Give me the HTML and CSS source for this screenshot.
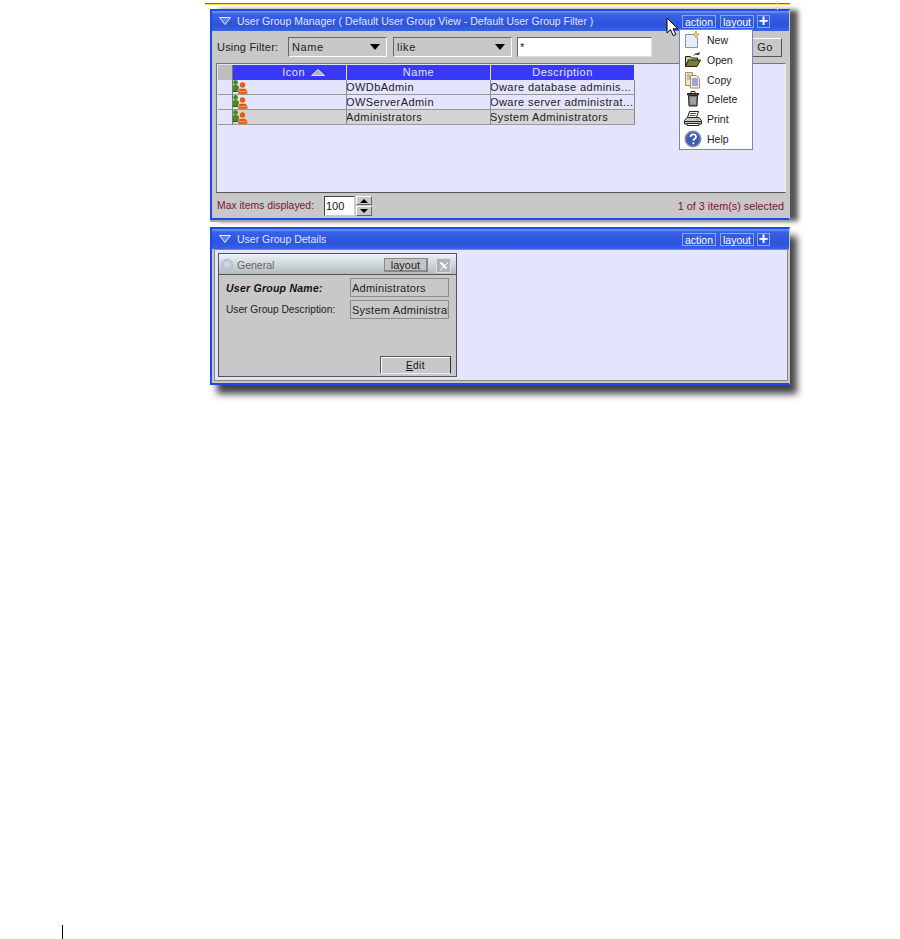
FILE: index.html
```html
<!DOCTYPE html>
<html lang="en">
<head>
<meta charset="utf-8">
<title>User Group Manager</title>
<link rel="stylesheet" href="styles.css">
</head>
<body>
<main class="page">
  <div class="shot">
    <div class="topline"></div>
    <section class="panel panel-manager">
      <header class="titlebar">
        <svg class="tri" width="12" height="8" viewBox="0 0 12 8"><path d="M.5.5h11L6 7.500z" fill="#5f80e8" stroke="#e8eeff"/></svg>
        <span class="title">User Group Manager ( Default User Group View - Default User Group Filter )</span>
        <span class="tool">action</span><span class="tool tool-layout">layout</span><span class="plus">+</span>
      </header>
      <div class="filterbar">
        <span class="label">Using Filter:</span>
        <span class="select sel-name">Name<i class="arrow"></i></span>
        <span class="select sel-like">like<i class="arrow"></i></span>
        <span class="input">*</span>
        <span class="go">Go</span>
      </div>
      <div class="tablearea">
        <div class="grid">
          <div class="corner"></div><div class="th th-icon">Icon <svg class="sort" width="14" height="7" viewBox="0 0 14 7"><path d="M7 .5L13.500 6.500H.5z" fill="#b4b4b4" stroke="#f4f4f4" stroke-width=".8"/></svg></div><div class="th">Name</div><div class="th">Description</div>
          <div class="rh"></div><div class="td"><svg class="grp" width="16" height="14" viewBox="0 0 16 14"><use href="#users"/></svg></div><div class="td">OWDbAdmin</div><div class="td">Oware database adminis...</div>
          <div class="rh"></div><div class="td"><svg class="grp" width="16" height="14" viewBox="0 0 16 14"><use href="#users"/></svg></div><div class="td">OWServerAdmin</div><div class="td">Oware server administrat...</div>
          <div class="rh"></div><div class="td sel"><svg class="grp" width="16" height="14" viewBox="0 0 16 14"><use href="#users"/></svg></div><div class="td sel">Administrators</div><div class="td sel">System Administrators</div>
        </div>
      </div>
      <footer class="statusbar">
        <span class="maroon max-label">Max items displayed:</span>
        <span class="spin-input">100</span>
        <span class="spin"><i class="up"></i><i class="down"></i></span>
        <span class="maroon status-right">1 of 3 item(s) selected</span>
      </footer>
    </section>

    <section class="panel panel-details">
      <header class="titlebar">
        <svg class="tri" width="12" height="8" viewBox="0 0 12 8"><path d="M.5.5h11L6 7.500z" fill="#5f80e8" stroke="#e8eeff"/></svg>
        <span class="title">User Group Details</span>
        <span class="tool">action</span><span class="tool tool-layout">layout</span><span class="plus">+</span>
      </header>
      <div class="detailarea">
        <div class="card">
          <div class="cardhead">
            <svg width="14" height="14" viewBox="0 0 14 14"><circle cx="7" cy="7" r="5" fill="none" stroke="#b4bedc" stroke-width="3" stroke-dasharray="2.500 .8"/></svg>
            <span class="cardtitle">General</span>
            <span class="cardlayout">layout</span>
            <span class="cardx"><svg width="13" height="13" viewBox="0 0 13 13"><path d="M3 10.500L10.500 3M3.500 3.500l6 6" stroke="#fff" stroke-width="2"/><path d="M2.500 10.500l3-3M7.500 5.500l3-3" stroke="#555" stroke-width=".7"/></svg></span>
          </div>
          <div class="cardbody">
            <div class="field"><span class="fname strong">User Group Name:</span><span class="fval">Administrators</span></div>
            <div class="field"><span class="fname">User Group Description:</span><span class="fval">System Administrators</span></div>
          </div>
          <div class="cardfoot"><span class="edit"><u>E</u>dit</span></div>
        </div>
      </div>
    </section>

    <nav class="menu">
      <div class="mi"><svg width="18" height="18" viewBox="0 0 18 18"><path d="M1.500 3.500h9l3 3v10h-12z" fill="#e6ecf8" stroke="#8a94b0"/><path d="M12 0l1 2.500 2.500 1-2.500 1-1 2.500-1-2.500-2.500-1 2.500-1z" fill="#f0d060" stroke="#a08020" stroke-width=".5"/></svg><span>New</span></div>
      <div class="mi"><svg width="18" height="18" viewBox="0 0 18 18"><path d="M1.500 15V5.500h5l1 1.500h6v2" fill="#c8c48c" stroke="#222"/><path d="M1.500 15.500l3-6.500h12l-3.500 6.500z" fill="#7c7c34" stroke="#222"/><path d="M10 4.500c1-2 3-2.500 5-1.500M15 1v2.500h-2.500" fill="none" stroke="#222"/></svg><span>Open</span></div>
      <div class="mi"><svg width="18" height="18" viewBox="0 0 18 18"><path d="M1.500 1.500h7v13h-7z" fill="#f4e4c8" stroke="#b08a50"/><path d="M6.500 4.500h6l3 3v9.500h-9z" fill="#eef0fa" stroke="#b08a50"/><path d="M8 8h6M8 10h6M8 12h6M8 14h6" stroke="#5058a8"/><path d="M3 4h3M3 6h3M3 8h3" stroke="#a09070"/></svg><span>Copy</span></div>
      <div class="mi"><svg width="18" height="18" viewBox="0 0 18 18"><path d="M3.500 3.500h11v1.500h-11z" fill="#666" stroke="#222"/><path d="M7 3V1.500h4V3" fill="none" stroke="#222"/><path d="M4.500 5.500h9l-.5 10.500H5z" fill="#777" stroke="#222"/><path d="M7 7v7.500M9 7v7.500M11 7v7.500" stroke="#ccc"/></svg><span>Delete</span></div>
      <div class="mi"><svg width="18" height="18" viewBox="0 0 18 18"><path d="M5.500 1.500h9l-2 6h-9z" fill="#fff" stroke="#222"/><path d="M6 3.500h6M5.500 5.500h6" stroke="#555"/><path d="M3 7.500h12l2.500 3v3.500H.5v-3.500z" fill="#c8c8c8" stroke="#222"/><path d="M1 11.500h16" stroke="#222"/><path d="M3 13.500h12v2H3z" fill="#fff" stroke="#222"/><path d="M12 9.500h3" stroke="#d0b020" stroke-width="1.500"/></svg><span>Print</span></div>
      <div class="mi"><svg width="18" height="18" viewBox="0 0 18 18"><circle cx="9" cy="9" r="7.700" fill="#3c5cb0" stroke="#8890a8" stroke-width="1.600"/><path d="M6.500 7c0-3.500 5.500-3.500 5.500-.3 0 2-2.600 2-2.600 4" fill="none" stroke="#fff" stroke-width="1.800"/><circle cx="9.400" cy="13.300" r="1.100" fill="#fff"/></svg><span>Help</span></div>
    </nav>

    <svg class="cursor" width="14" height="20" viewBox="0 0 14 20"><path d="M1 1v15l3.500-3.300 2.700 6 2.600-1.200-2.700-5.700H12z" fill="#fff" stroke="#000"/></svg>
  </div>

  <div class="pagefoot"><i class="changebar"></i></div>
</main>

<svg class="defs" width="0" height="0" aria-hidden="true">
  <defs>
    <g id="users">
      <circle cx="3.500" cy="2.500" r="2.400" fill="#4c8a1c"/>
      <path d="M.5 11.500V6.500L2 5h3l2 1.500V8L6 11.500z" fill="#4c8a1c"/>
      <path d="M.5 11h6v1h-6z" fill="#2c5a10"/>
      <path d="M6 14v-2.800L7.500 8.500h6l2 2.700V14z" fill="#e05a10" stroke="#fff" stroke-width=".3"/>
      <circle cx="10.500" cy="5" r="2.700" fill="#e06010"/>
      <path d="M7 11.500h7.500" stroke="#f8a060"/>
    </g>
  </defs>
</svg>
</body>
</html>
```
FILE: styles.css
```css
* { box-sizing: border-box; }
html, body { margin: 0; padding: 0; background: #fff; }
body { font-family: "Liberation Sans", Arial, sans-serif; font-size: 11px; color: #111; }
i { display: block; }
.defs { position: absolute; }

.page { height: 939px; display: flex; flex-direction: column; justify-content: space-between; overflow: hidden; }
.shot { position: relative; width: 580px; margin: 3px 0 0 210px; }
.topline { position: relative; height: 2px; margin-left: -5px; border-top: 1px solid #4c6ce0; background: #f0e040; margin-bottom: 4px; }
.topline::after { content: ""; position: absolute; left: 572px; top: -3px; width: 1px; height: 9px; background: #d8dcf8; }

.panel { border: 2px solid #2048e8; border-right: 1px solid #c8c8c8; background: #c8c8c8; display: flex; flex-direction: column; }
.panel-manager { height: 211px; box-shadow: 0 2px 0 #a8a8a8, 8px 1px 5px 0 #555; }
.panel-details { margin-top: 7px; height: 158px; box-shadow: 7px 9px 7px 0 #444; }

.titlebar { height: 20px; flex: none; display: flex; align-items: center; padding: 0 19px 0 7px; color: #dfe6fb; background: linear-gradient(#7c9cf4 0, #3a62e4 3px, #2c54dc 14px, #3a62e4 20px); font-size: 10.500px; }
.tri { margin-right: 6px; }
.title { flex: 1; white-space: nowrap; }
.tool { border: 1px solid #8ea6f0; height: 13px; line-height: 12px; color: #fff; font-size: 10.500px; width: 34px; text-align: center; }
.tool-layout { margin-left: 4px; }
.plus { width: 13px; height: 13px; border: 1px solid #8ea6f0; margin-left: 3px; color: #fff; font: bold 16px/10px "Liberation Sans", sans-serif; text-align: center; }

.filterbar { height: 32px; flex: none; display: flex; align-items: center; padding: 0 7px 0 5px; gap: 6px; color: #222; }
.label { width: 65px; letter-spacing: .2px; }
.select { position: relative; display: block; height: 20px; line-height: 18px; border: 1px solid; border-color: #666 #fff #fff #666; padding-left: 3px; background: #c8c8c8; letter-spacing: .6px; }
.sel-name { width: 99px; }
.sel-like { width: 119px; }
.arrow { position: absolute; right: 6px; top: 6px; width: 0; height: 0; border: 5px solid transparent; border-top: 6px solid #000; border-bottom: 0; }
.input { width: 135px; height: 20px; border: 1px solid; border-color: #666 #ddd #ddd #666; background: #fff; padding-left: 2px; line-height: 18px; margin-left: -1px; }
.go { margin-left: auto; width: 34px; height: 19px; border: 1px solid; border-color: #fff #555 #555 #fff; line-height: 17px; text-align: center; letter-spacing: .3px; }

.tablearea { height: 130px; flex: none; margin: 0 3px 0 4px; background: #e4e4fc; border: 1px solid #777; border-right-color: #eee; border-bottom-color: #555; padding: 1px; }
.grid { display: grid; grid-template-columns: 15px 114px 144px 144px; grid-template-rows: 15px 15px 15px 15px; width: 417px; letter-spacing: .42px; }
.corner { background: #bdbdbd; border-right: 1px solid #777; }
.th { background: #3838f8; color: #e4e4f4; text-align: center; border-right: 1px solid #e4e4fc; line-height: 14px; letter-spacing: .5px; }
.th-icon { padding-left: 28px; }
.sort { vertical-align: 0; margin-left: 2px; }
.rh { border-bottom: 1px solid #999; border-right: 1px solid #777; }
.td { border-right: 1px solid #888; border-bottom: 1px solid #999; line-height: 14px; white-space: nowrap; overflow: hidden; color: #222; text-indent: -1px; }
.sel { background: #d4d4d4; }
.grp { display: block; margin-left: -1px; }

.statusbar { flex: 1; display: flex; align-items: center; padding: 0 5px 0 5px; font-size: 10.400px; }
.maroon { color: #80103c; }
.max-label { width: 107px; white-space: nowrap; }
.spin-input { width: 31px; height: 20px; background: #fff; border: 1px solid; border-color: #444 #ccc #ccc #444; font-size: 11px; line-height: 18px; padding-left: 1px; }
.spin { width: 16px; height: 20px; margin-left: 1px; display: flex; flex-direction: column; gap: 1px; }
.spin i { flex: 1; border: 1px solid; border-color: #fff #666 #666 #fff; position: relative; }
.spin i::after { content: ""; position: absolute; left: 3px; top: 2px; border: 4px solid transparent; }
.up::after { border-bottom: 4px solid #000 !important; border-top: 0 !important; }
.down::after { border-top: 4px solid #000 !important; border-bottom: 0 !important; }
.status-right { margin-left: auto; font-size: 10.800px; }

.detailarea { flex: 1; margin: 0 1px 2px 2px; background: #e4e4fc; border: 1px solid #888; padding: 3px 0 0 3px; }
.card { width: 239px; height: 124px; background: #c8c8c8; border: 1px solid #555; display: flex; flex-direction: column; }
.cardhead { height: 21px; flex: none; display: flex; align-items: center; padding: 2px 5px 0 1px; gap: 3px; background: linear-gradient(#eef2f6, #b0bcc0); color: #666; border-bottom: 1px solid #555; font-size: 10.500px; }
.cardtitle { flex: 1; }
.cardlayout { width: 44px; height: 14px; line-height: 13px; background: #c4c4c4; border: 1px solid #888; border-right-width: 2px; border-bottom-width: 2px; color: #222; text-align: center; margin-right: 5px; font-size: 11px; }
.cardx { width: 15px; height: 15px; background: #b0b4b8; border: 1px solid #ddd; display: flex; }
.cardbody { flex: 1; padding: 3px 7px 0; display: flex; flex-direction: column; gap: 3px; }
.field { display: flex; height: 19px; align-items: center; }
.fname { width: 124px; font-size: 10.200px; color: #222; white-space: nowrap; }
.strong { font-size: 10.500px; font-weight: bold; font-style: italic; color: #111; letter-spacing: .25px; }
.fval { width: 99px; height: 19px; border: 1px solid #8c8c8c; line-height: 18px; padding-left: 1px; white-space: nowrap; overflow: hidden; color: #222; letter-spacing: .25px; }
.cardfoot { display: flex; justify-content: flex-end; padding: 0 5px 2px 0; }
.edit { width: 71px; height: 18px; border: 1px solid; border-color: #555 #333 #eee #555; box-shadow: inset 1px 1px #fff; text-align: center; line-height: 17px; font-size: 10px; letter-spacing: .5px; }

.menu { position: absolute; left: 469px; top: 26px; width: 74px; height: 121px; background: #fff; border: 1px solid #7c84b8; padding: .6px 0 .4px 4px; display: flex; flex-direction: column; color: #222; font-size: 10.500px; }
.mi { flex: 1; display: flex; align-items: center; gap: 5px; }

.cursor { position: absolute; left: 456px; top: 14px; }

.pagefoot { height: 14px; padding-left: 62px; }
.changebar { width: 1px; height: 14px; background: #000; }
```
